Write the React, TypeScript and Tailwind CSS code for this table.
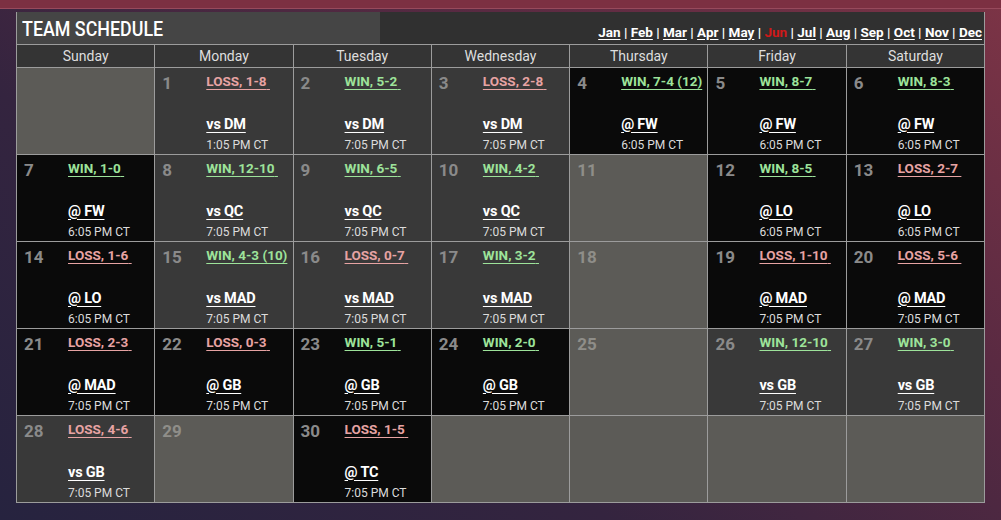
import React from "react";

type Game = {
  day?: number;
  result?: string;
  win?: boolean;
  opp?: string;
  away?: boolean;
  time?: string;
};

const months = ["Jan", "Feb", "Mar", "Apr", "May", "Jun", "Jul", "Aug", "Sep", "Oct", "Nov", "Dec"];
const days = ["Sunday", "Monday", "Tuesday", "Wednesday", "Thursday", "Friday", "Saturday"];

const W = (day: number, result: string, opp: string, time: string): Game => ({
  day,
  result,
  win: result.startsWith("WIN"),
  opp,
  away: opp.startsWith("@"),
  time,
});

const weeks: Game[][] = [
  [
    {},
    W(1, "LOSS, 1-8", "vs DM", "1:05 PM CT"),
    W(2, "WIN, 5-2", "vs DM", "7:05 PM CT"),
    W(3, "LOSS, 2-8", "vs DM", "7:05 PM CT"),
    W(4, "WIN, 7-4 (12)", "@ FW", "6:05 PM CT"),
    W(5, "WIN, 8-7", "@ FW", "6:05 PM CT"),
    W(6, "WIN, 8-3", "@ FW", "6:05 PM CT"),
  ],
  [
    W(7, "WIN, 1-0", "@ FW", "6:05 PM CT"),
    W(8, "WIN, 12-10", "vs QC", "7:05 PM CT"),
    W(9, "WIN, 6-5", "vs QC", "7:05 PM CT"),
    W(10, "WIN, 4-2", "vs QC", "7:05 PM CT"),
    { day: 11 },
    W(12, "WIN, 8-5", "@ LO", "6:05 PM CT"),
    W(13, "LOSS, 2-7", "@ LO", "6:05 PM CT"),
  ],
  [
    W(14, "LOSS, 1-6", "@ LO", "6:05 PM CT"),
    W(15, "WIN, 4-3 (10)", "vs MAD", "7:05 PM CT"),
    W(16, "LOSS, 0-7", "vs MAD", "7:05 PM CT"),
    W(17, "WIN, 3-2", "vs MAD", "7:05 PM CT"),
    { day: 18 },
    W(19, "LOSS, 1-10", "@ MAD", "7:05 PM CT"),
    W(20, "LOSS, 5-6", "@ MAD", "7:05 PM CT"),
  ],
  [
    W(21, "LOSS, 2-3", "@ MAD", "7:05 PM CT"),
    W(22, "LOSS, 0-3", "@ GB", "7:05 PM CT"),
    W(23, "WIN, 5-1", "@ GB", "7:05 PM CT"),
    W(24, "WIN, 2-0", "@ GB", "7:05 PM CT"),
    { day: 25 },
    W(26, "WIN, 12-10", "vs GB", "7:05 PM CT"),
    W(27, "WIN, 3-0", "vs GB", "7:05 PM CT"),
  ],
  [
    W(28, "LOSS, 4-6", "vs GB", "7:05 PM CT"),
    { day: 29 },
    W(30, "LOSS, 1-5", "@ TC", "7:05 PM CT"),
    {},
    {},
    {},
    {},
  ],
];

const DayCell = ({ g }: { g: Game }) => {
  if (!g.result) {
    return (
      <div className="h-[86px] bg-[#5c5b57] pl-[7px] pt-[4px]">
        {g.day && <span className="text-[17px] font-bold leading-none text-[#8f8e89]">{g.day}</span>}
      </div>
    );
  }
  const bg = g.away ? "bg-[#0a0a0a]" : "bg-[#393939]";
  const color = g.win ? "text-[#9de39a] decoration-[#9de39a]" : "text-[#e7a3a3] decoration-[#e7a3a3]";
  const extra = g.result.includes("(");
  return (
    <div className={`flex h-[86px] ${bg}`}>
      <div className="w-[51px] shrink-0 pl-[7px] pt-[7px] text-[17px] font-bold leading-none text-[#8a8a8a]">
        {g.day}
      </div>
      <div className="flex flex-col pt-[7px] pb-[3px] whitespace-nowrap">
        <span className={`text-[13.5px] font-bold leading-none underline underline-offset-[3px] ${color}`}>
          {g.result}
          {!extra && "\u00a0"}
        </span>
        <span className="mt-auto text-[14.5px] font-bold leading-none tracking-[-0.2px] text-white underline underline-offset-[3px]">
          {g.opp}
        </span>
        <span className="mt-[7px] text-[12px] leading-none text-[#dcdcdc]">{g.time}</span>
      </div>
    </div>
  );
};

export default function App() {
  return (
    <div
      className="w-[1001px] h-[520px] overflow-hidden bg-[linear-gradient(35deg,#26233f_0%,#34243f_35%,#5a2a42_70%,#7c3446_100%)]"
      style={{ fontFamily: "Roboto, 'Liberation Sans', sans-serif" }}
    >
      <div className="h-[9px] bg-[#7c3042] border-b border-[#974a5c]" />
      <div className="ml-[16px] mt-[3px] w-[969px] border-x border-[#9c9c9c]">
        <div className="flex h-[32px]">
          <div className="w-[363px] bg-[#454545] pl-[5px] pt-[7px]">
            <span className="inline-block origin-left scale-x-[0.85] whitespace-nowrap text-[21px] font-medium leading-none text-white">
              TEAM SCHEDULE
            </span>
          </div>
          <div className="flex flex-1 items-end justify-end bg-[#303030] pb-[5px] pr-[2px] text-[13.5px] font-bold leading-none text-white">
            {months.map((m, i) => (
              <React.Fragment key={m}>
                {i > 0 && <span className="whitespace-pre"> | </span>}
                {m === "Jun" ? (
                  <span className="text-[#d01818]">{m}</span>
                ) : (
                  <span className="underline underline-offset-[2px]">{m}</span>
                )}
              </React.Fragment>
            ))}
          </div>
        </div>
        <div className="grid grid-cols-7 gap-px bg-[#9c9c9c] py-px">
          {days.map((d) => (
            <div key={d} className="h-[22px] bg-[#343434] pt-[4px] text-center text-[14px] leading-none text-[#dedede]">
              {d}
            </div>
          ))}
          {weeks.flat().map((g, i) => (
            <DayCell key={i} g={g} />
          ))}
        </div>
      </div>
    </div>
  );
}
